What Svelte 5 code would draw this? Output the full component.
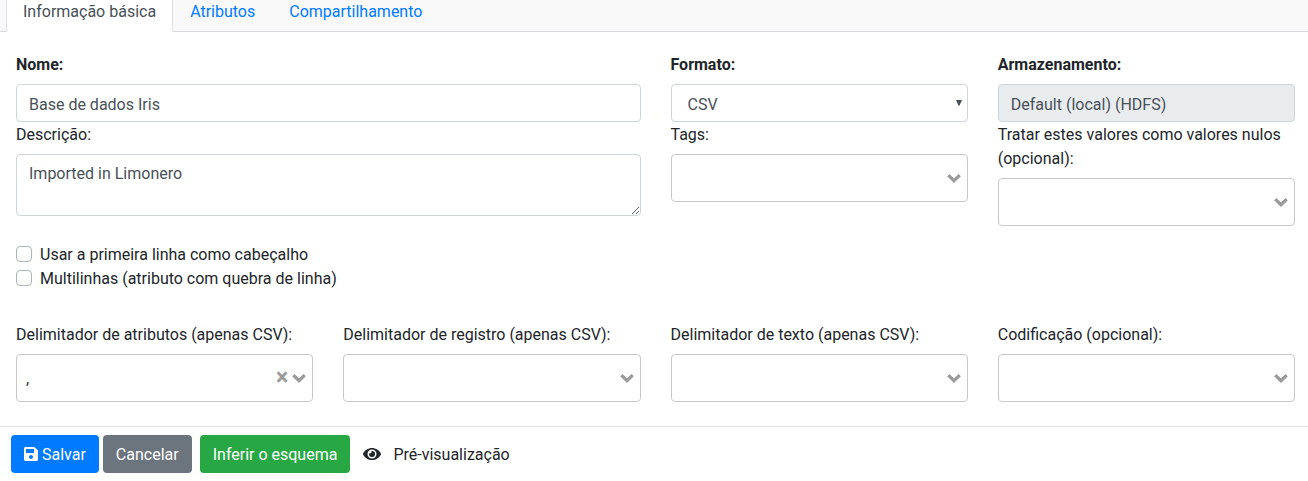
<script>
  let name = $state('Base de dados Iris');
  let description = $state('Imported in Limonero');
  const delimiters = [
    { label: 'Delimitador de atributos (apenas CSV):', value: ',' },
    { label: 'Delimitador de registro (apenas CSV):', value: '' },
    { label: 'Delimitador de texto (apenas CSV):', value: '' },
    { label: 'Codificação (opcional):', value: '' }
  ];
</script>

{#snippet picker(value)}
  <div class="picker">
    <span class="value">{value}</span>
    {#if value}<button class="clear" type="button">×</button>{/if}
    <svg class="chevron" width="14" height="12" viewBox="0 0 14 12">
      <path d="M1.3 3.1 7 8.7l5.7-5.6" fill="none" stroke="#9b9b9b" stroke-width="3.4" />
    </svg>
  </div>
{/snippet}

<nav class="tabs">
  <a class="tab active" href="#basic">Informação básica</a>
  <a class="tab" href="#attributes">Atributos</a>
  <a class="tab" href="#sharing">Compartilhamento</a>
</nav>

<main>
  <div class="grid top">
    <div class="wide">
      <label class="bold" for="name">Nome:</label>
      <input id="name" class="control" bind:value={name} />
      <label for="description">Descrição:</label>
      <textarea id="description" class="control" rows="2" bind:value={description}></textarea>
    </div>
    <div>
      <span class="label bold">Formato:</span>
      <div class="control select">
        <span>CSV</span>
        <svg width="6" height="6" viewBox="0 0 6 6"><path d="M0 0h6L3.6 5.6H2.4z" fill="#495057" /></svg>
      </div>
      <span class="label">Tags:</span>
      {@render picker('')}
    </div>
    <div>
      <label class="bold" for="storage">Armazenamento:</label>
      <input id="storage" class="control" value="Default (local) (HDFS)" disabled />
      <span class="label">Tratar estes valores como valores nulos (opcional):</span>
      {@render picker('')}
    </div>
  </div>

  <div class="checks">
    <label class="check"><input type="checkbox" /><span>Usar a primeira linha como cabeçalho</span></label>
    <label class="check"><input type="checkbox" /><span>Multilinhas (atributo com quebra de linha)</span></label>
  </div>

  <div class="grid">
    {#each delimiters as field}
      <div>
        <span class="label">{field.label}</span>
        {@render picker(field.value)}
      </div>
    {/each}
  </div>
</main>

<footer>
  <button class="btn primary" type="button">
    <svg width="14" height="16" viewBox="0 0 448 512"><path fill="currentColor" d="M433.941 129.941l-83.882-83.882A48 48 0 0 0 316.118 32H48C21.49 32 0 53.49 0 80v352c0 26.51 21.49 48 48 48h352c26.51 0 48-21.49 48-48V163.882a48 48 0 0 0-14.059-33.941zM224 416c-35.346 0-64-28.654-64-64 0-35.346 28.654-64 64-64s64 28.654 64 64c0 35.346-28.654 64-64 64zm96-304.52V212c0 6.627-5.373 12-12 12H76c-6.627 0-12-5.373-12-12V108c0-6.627 5.373-12 12-12h228.52c3.183 0 6.235 1.264 8.485 3.515l3.48 3.48A11.996 11.996 0 0 1 320 111.48z" /></svg>
    <span>Salvar</span>
  </button>
  <button class="btn secondary" type="button"><span>Cancelar</span></button>
  <button class="btn success" type="button"><span>Inferir o esquema</span></button>
  <button class="btn plain" type="button">
    <svg width="18" height="16" viewBox="0 0 576 512"><path fill="currentColor" d="M572.52 241.4C518.29 135.59 410.93 64 288 64S57.68 135.64 3.48 241.41a32.35 32.35 0 0 0 0 29.19C57.71 376.41 165.07 448 288 448s230.32-71.64 284.52-177.41a32.35 32.35 0 0 0 0-29.19zM288 400a144 144 0 1 1 144-144 143.93 143.93 0 0 1-144 144zm0-240a95.31 95.31 0 0 0-25.31 3.79 47.85 47.85 0 0 1-66.9 66.9A95.78 95.78 0 1 0 288 160z" /></svg>
    <span>Pré-visualização</span>
  </button>
</footer>

<style>
  :global(body) {
    overflow: hidden;
    background: #fff;
    color: #212529;
    font: 16px/24px Roboto, sans-serif;
  }
  :global(*) { box-sizing: border-box; }
  input, textarea, button { font: inherit; margin: 0; }
  svg { display: block; flex: none; }

  .tabs {
    display: flex;
    align-items: flex-end;
    height: 32px;
    padding-left: 6px;
    background: #f9f9f9;
    box-shadow: inset 0 -1px #d9dbde;
  }
  .tab {
    height: 42px;
    padding: 9px 16px 7px;
    border: 1px solid transparent;
    color: #007bff;
    text-decoration: none;
  }
  .active {
    background: #fff;
    border-color: #dee2e6 #dee2e6 #fff;
    color: #495057;
  }

  main { padding: 20px 13px 0 16px; }
  .grid {
    display: grid;
    grid-template-columns: repeat(4, 1fr);
    column-gap: 30px;
  }
  .wide { grid-column: span 2; }
  label, .label { display: block; padding: 1px 0 7px; }
  .bold { font-weight: 700; }

  .control {
    display: block;
    width: 100%;
    height: 38px;
    padding: 7px 12px 5px;
    border: 1px solid #ced4da;
    border-radius: 4px;
    background: #fff;
    color: #495057;
    outline: 0;
  }
  .control:disabled { background: #e9ecef; }
  textarea.control { height: 62px; }
  .select {
    display: flex;
    justify-content: space-between;
    padding: 7px 5px 5px 16px;
  }
  .select span { padding-top: 1px; }
  .select svg { margin-top: 8px; }

  .picker {
    display: flex;
    align-items: center;
    height: 48px;
    padding: 0 6px 0 9px;
    border: 1px solid #c8c8c8;
    border-radius: 4px;
  }
  .value { flex: 1; padding-top: 2px; color: #333; }
  .clear {
    padding: 0 0 1px;
    margin-right: 4px;
    border: 0;
    background: none;
    color: #9b9b9b;
    font-size: 23px;
    font-weight: 700;
    line-height: 22px;
  }

  .checks { margin: 16px 0 32px; }
  .check { display: flex; align-items: center; gap: 8px; height: 24px; padding: 0; }
  .check span, .btn span { padding-top: 2px; }
  .check input {
    appearance: none;
    width: 16px;
    height: 16px;
    border: 1px solid #adb5bd;
    border-radius: 4px;
    background: #fff;
  }

  footer {
    display: flex;
    margin-top: 24px;
    padding: 8px 11px;
    border-top: 1px solid #dee2e6;
  }
  .btn {
    display: flex;
    align-items: center;
    height: 38px;
    padding: 0 13px;
    border: 0;
    border-radius: 4px;
    color: #fff;
  }
  .primary { gap: 4px; margin-right: 4px; background: #007bff; }
  .secondary { margin-right: 8px; background: #6c757d; }
  .success { background: #28a745; }
  .plain { gap: 12px; background: none; color: #212529; }
</style>
